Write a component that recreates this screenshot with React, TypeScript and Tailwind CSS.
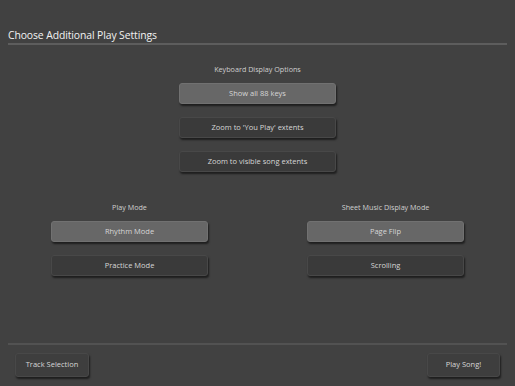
import React from "react";

type Btn = { label: string; active?: boolean };

const font = { fontFamily: '"Open Sans", "DejaVu Sans", sans-serif' };

function OptionButton({ label, active, className = "" }: Btn & { className?: string }) {
  return (
    <div
      className={[
        "flex items-center justify-center rounded-[3px] text-[7.5px] text-[#d6d6d6]",
        "border border-[#484848] shadow-[1px_2px_2px_rgba(0,0,0,0.55)]",
        active ? "bg-[#676767] border-[#717171]" : "bg-[#3a3a3a]",
        className,
      ].join(" ")}
    >
      {label}
    </div>
  );
}

function Section({ title, items, width }: { title: string; items: Btn[]; width: string }) {
  return (
    <div className="flex flex-col items-center">
      <div className="h-[10px] text-[7.2px] leading-[10px] text-[#cfcfcf]">{title}</div>
      <div className="mt-[9px] flex flex-col gap-[13px]">
        {items.map((it) => (
          <OptionButton key={it.label} {...it} className={`h-[21px] ${width}`} />
        ))}
      </div>
    </div>
  );
}

export default function App() {
  return (
    <div className="h-[386px] w-[515px] bg-[#414141] px-2 flex flex-col" style={font}>
      {/* header */}
      <div className="pt-[29px] text-[10.4px] leading-[12px] font-medium text-[#f2f2f2] tracking-[-0.1px]">
        Choose Additional Play Settings
      </div>
      <div className="mt-[2px] h-[2px] bg-[#5d5d5d]" />

      {/* keyboard options */}
      <div className="mt-[19px] flex justify-center">
        <Section
          title="Keyboard Display Options"
          width="w-[157px]"
          items={[
            { label: "Show all 88 keys", active: true },
            { label: "Zoom to 'You Play' extents" },
            { label: "Zoom to visible song extents" },
          ]}
        />
      </div>

      {/* modes */}
      <div className="mt-[30px] flex justify-between px-[43px]">
        <Section
          title="Play Mode"
          width="w-[157px]"
          items={[{ label: "Rhythm Mode", active: true }, { label: "Practice Mode" }]}
        />
        <Section
          title="Sheet Music Display Mode"
          width="w-[157px]"
          items={[{ label: "Page Flip", active: true }, { label: "Scrolling" }]}
        />
      </div>

      <div className="mt-auto h-[2px] bg-[#525252]" />
      <div className="flex justify-between px-[7px] pt-[8px] pb-[9px]">
        <OptionButton label="Track Selection" className="h-[24px] w-[74px] bg-[#3e3e3e] text-[#bdbdbd]" />
        <OptionButton label="Play Song!" className="h-[24px] w-[73px] bg-[#3e3e3e] text-[#bdbdbd]" />
      </div>
    </div>
  );
}
